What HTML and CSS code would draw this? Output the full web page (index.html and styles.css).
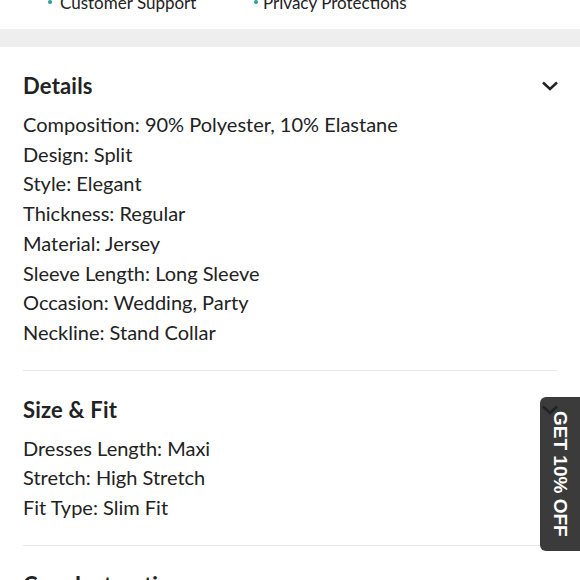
FILE: index.html
```html
<!DOCTYPE html>
<html lang="en">
<head>
<meta charset="utf-8">
<title>Product details</title>
<link rel="stylesheet" href="styles.css">
</head>
<body>
<div class="page">
  <ul class="features">
    <li><span class="dot"></span>Customer Support</li>
    <li><span class="dot"></span>Privacy Protections</li>
  </ul>
  <div class="band"></div>

  <section class="acc">
    <div class="acc-head">
      <h2>Details</h2>
      <svg class="chev" width="18" height="12" viewBox="0 0 18 12"><path d="M2 2.5 L9 9 L16 2.5" fill="none" stroke="#222" stroke-width="2.5"/></svg>
    </div>
    <div class="acc-body">
      <p>Composition: 90% Polyester, 10% Elastane</p>
      <p>Design: Split</p>
      <p>Style: Elegant</p>
      <p>Thickness: Regular</p>
      <p>Material: Jersey</p>
      <p>Sleeve Length: Long Sleeve</p>
      <p>Occasion: Wedding, Party</p>
      <p>Neckline: Stand Collar</p>
    </div>
  </section>

  <section class="acc">
    <div class="acc-head">
      <h2>Size &amp; Fit</h2>
      <svg class="chev" width="18" height="12" viewBox="0 0 18 12"><path d="M2 2.5 L9 9 L16 2.5" fill="none" stroke="#222" stroke-width="2.5"/></svg>
    </div>
    <div class="acc-body">
      <p>Dresses Length: Maxi</p>
      <p>Stretch: High Stretch</p>
      <p>Fit Type: Slim Fit</p>
    </div>
  </section>

  <section class="acc">
    <div class="acc-head">
      <h2>Care Instructions</h2>
      <svg class="chev" width="18" height="12" viewBox="0 0 18 12"><path d="M2 2.5 L9 9 L16 2.5" fill="none" stroke="#222" stroke-width="2.5"/></svg>
    </div>
  </section>
</div>

<div class="promo">GET 10% OFF</div>
</body>
</html>
```

FILE: styles.css
```css
html, body {
  margin: 0;
  padding: 0;
  background: #fff;
  overflow: hidden;
}

body {
  font-family: Lato, "Open Sans", sans-serif;
  color: #222;
}

.page {
  width: 580px;
}

.features {
  list-style: none;
  margin: -9px 0 0;
  padding: 0 0 0 48px;
  display: grid;
  grid-template-columns: 206px 1fr;
  height: 38px;
  font-size: 17px;
  line-height: 24px;
  color: #222;
}

.features li {
  display: flex;
  align-items: center;
  height: 24px;
}

.dot {
  width: 4px;
  height: 4px;
  border-radius: 50%;
  background: #2a9d8f;
  margin-right: 8px;
  align-self: flex-start;
  margin-top: 9px;
}

.features li + li .dot {
  margin-left: 0;
  margin-right: 5px;
}

.band {
  height: 18px;
  background: #eeeeee;
}

.acc {
  padding: 0 23px;
}

.acc-head {
  display: flex;
  justify-content: space-between;
  align-items: center;
  padding-top: 25px;
  height: 28px;
}

.acc-head h2 {
  margin: 0;
  font-size: 22px;
  font-weight: 700;
  line-height: 28px;
  letter-spacing: 0.2px;
}

.chev {
  display: block;
  margin-right: -2px;
  position: relative;
  z-index: 2;
}

.acc-body {
  padding: 10px 0 22px;
  border-bottom: 1px solid #e8e8e8;
}

.acc-body p {
  margin: 0;
  font-size: 20px;
  line-height: 29.7px;
}

.promo {
  position: fixed;
  right: 0;
  top: 397px;
  width: 40px;
  height: 154px;
  background: #3b3b3b;
  border-radius: 6px 0 0 6px;
  color: #fff;
  font-family: "Liberation Sans", Arial, sans-serif;
  font-weight: 700;
  font-size: 19px;
  writing-mode: vertical-rl;
  display: flex;
  align-items: center;
  justify-content: center;
  z-index: 1;
}
```
